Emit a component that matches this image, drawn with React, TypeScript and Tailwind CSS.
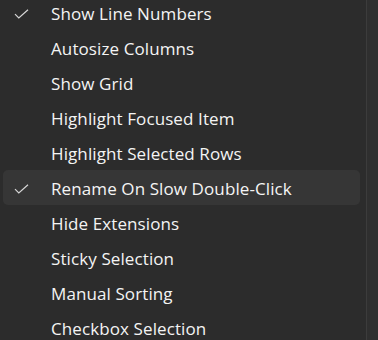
import React from "react";

const items = [
  { label: "Show Line Numbers", checked: true },
  { label: "Autosize Columns", checked: false },
  { label: "Show Grid", checked: false },
  { label: "Highlight Focused Item", checked: false },
  { label: "Highlight Selected Rows", checked: false },
  { label: "Rename On Slow Double-Click", checked: true, active: true },
  { label: "Hide Extensions", checked: false },
  { label: "Sticky Selection", checked: false },
  { label: "Manual Sorting", checked: false },
  { label: "Checkbox Selection", checked: false },
];

function Check() {
  return (
    <svg width="15" height="10" viewBox="0 0 15 10" fill="none">
      <path d="M1 5.2 L4.8 9 L14 0.8" stroke="#d6d6d6" strokeWidth="1.2" />
    </svg>
  );
}

export default function App() {
  return (
    <div className="flex h-[340px] w-[378px] overflow-hidden bg-[#2c2c2c]" style={{ fontFamily: '"Open Sans", "Noto Sans", sans-serif' }}>
      <div className="-mt-[5px] w-[366px] pl-[3px] pr-[6px]">
        {items.map((item, i) => (
          <div
            key={i}
            className={`flex h-[35px] items-center rounded-[5px] pt-[3px] ${item.active ? "bg-[#363636]" : ""}`}
          >
            <div className="flex w-[48px] justify-start pl-[11px]">{item.checked && <Check />}</div>
            <span className="text-[17px] font-normal tracking-[0.1px] text-[#f4f4f4]">{item.label}</span>
          </div>
        ))}
      </div>
      <div className="w-[12px] border-l border-[#3c3c3c] bg-[#2f2f2f]" />
    </div>
  );
}
